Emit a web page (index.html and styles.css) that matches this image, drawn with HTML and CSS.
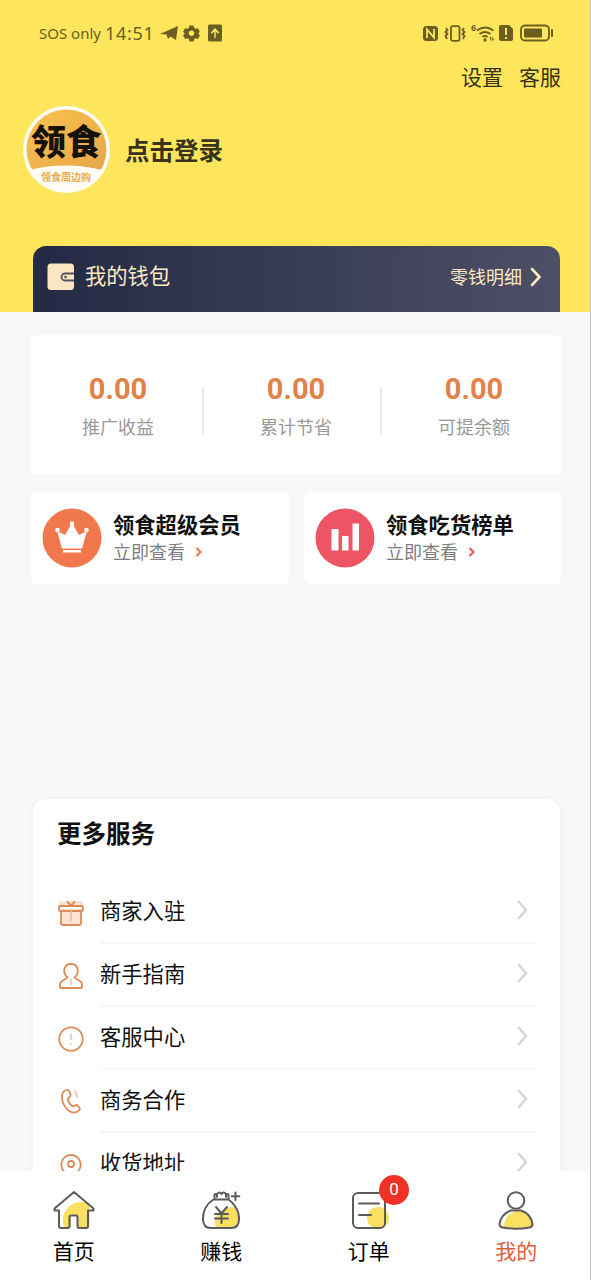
FILE: index.html
```html
<!DOCTYPE html>
<html lang="zh-CN">
<head>
<meta charset="utf-8">
<title>我的</title>
<link rel="stylesheet" href="styles.css">
</head>
<body>
<div class="screen">
  <header class="hero">
    <div class="status">
      <span class="carrier">SOS only</span>
      <span class="clock">14:51</span>
      <svg class="status-left" width="66" height="20" viewBox="0 0 66 20">
        <path d="M0 11 18 3 16 17 10.500 13.500 8 16 6.500 11.500Z"/>
        <path fill-rule="evenodd" d="M29.500 2.500h4l.7 2.500 1.300.8 2.400-.6 2 3.500-1.700 1.800 1.700 2-2 3.500-2.400-.7-1.300.8-.7 2.400h-4l-.7-2.400-1.300-.8-2.400.7-2-3.500 1.700-2-1.700-1.800 2-3.500 2.400.6 1.300-.8ZM31.500 7.400a2.800 2.800 0 1 0 .01 0Z"/>
        <path fill-rule="evenodd" d="M49.500 1.500h11a1.500 1.500 0 0 1 1.500 1.500v14a1.500 1.500 0 0 1-1.500 1.500h-11a1.500 1.500 0 0 1-1.500-1.500v-14a1.500 1.500 0 0 1 1.500-1.500ZM55 5 50.800 9.600 52 10.700 54.300 8.500V15h1.400V8.500L58 10.700 59.200 9.600Z"/>
      </svg>
      <svg class="status-right" width="132" height="22" viewBox="0 0 132 22">
        <rect x="2" y="4" width="15" height="15" rx="3.500"/>
        <path class="cut" d="M6 16V7.500l7 8V7"/>
        <g class="line">
          <rect x="30" y="4.200" width="8.500" height="14.600" rx="1.500"/>
          <path d="m25 6 1.500 2-2 2 2 2-2 2 1.500 3M43 6l-1.500 2 2 2-2 2 2 2-1.500 3"/>
          <path d="M56 8.500q8-6 16.500 0M58.500 12q5.500-4 11 0M61.500 15q2.700-2 5 0"/>
          <rect x="100" y="3.500" width="28" height="15" rx="4"/>
        </g>
        <text class="tiny" x="50" y="9">6</text>
        <circle cx="64" cy="18" r="1.700"/>
        <path d="m68.500 16 1.700-1.700V19Zm4.500 1.500-1.700 1.700V14.500Z"/>
        <path fill-rule="evenodd" d="M82 3h6l4 4v10q0 2-2 2h-10q-2 0-2-2V5q0-2 2-2ZM84 6v7h2V6Zm0 9v2h2v-2Z"/>
        <rect x="103" y="6.500" width="18" height="9" rx="1"/>
        <rect x="130" y="7" width="2" height="8" rx="1"/>
      </svg>
    </div>
    <nav class="links"><a>设置</a><a>客服</a></nav>
    <div class="profile">
      <svg class="avatar" width="88" height="88" viewBox="0 0 88 88">
        <defs>
          <clipPath id="disc"><circle cx="44.500" cy="43.500" r="40"/></clipPath>
          <linearGradient id="gold" x1="0" y1="0" x2="1" y2="1"><stop offset="0" stop-color="#fbc34c"/><stop offset="1" stop-color="#e5a64b"/></linearGradient>
        </defs>
        <circle cx="44.500" cy="43.500" r="43.500" fill="#fffdf5"/>
        <g clip-path="url(#disc)"><path fill="url(#gold)" d="M0 0h88v66Q44 53 0 66Z"/></g>
        <text class="logo" x="44" y="49">领食</text>
        <text class="logo-sub" x="44" y="75">领食周边购</text>
      </svg>
      <span class="login">点击登录</span>
    </div>
    <div class="wallet">
      <svg width="28" height="28" viewBox="0 0 28 28">
        <rect x=".5" y=".5" width="26.500" height="26.500" rx="3.500" fill="#fbe7c1"/>
        <path d="M27 10.500h-9a3.500 3.500 0 0 0 0 7h9" fill="none" stroke="#555260" stroke-width="1.800"/>
        <circle cx="18.500" cy="14" r="1.300" fill="#555260"/>
      </svg>
      <span class="wallet-title">我的钱包</span>
      <span class="wallet-more">零钱明细</span>
      <svg width="12" height="20" viewBox="0 0 12 20"><path d="m2 2 7.500 8L2 18" fill="none" stroke="#fbe9c3" stroke-width="2.600" stroke-linecap="round"/></svg>
    </div>
  </header>

  <main class="content">
    <section class="stats">
      <div class="stat"><b>0.00</b><span>推广收益</span></div>
      <div class="stat"><b>0.00</b><span>累计节省</span></div>
      <div class="stat"><b>0.00</b><span>可提余额</span></div>
    </section>

    <section class="promos">
      <div class="promo vip">
        <svg width="60" height="60" viewBox="0 0 60 60">
          <circle cx="30" cy="30" r="29.500" fill="#f1774d"/>
          <g fill="#fff"><path d="m15 23 8 4 7-12 7 12 8-4-5 17.500h-20Z"/><rect x="21" y="42" width="18" height="2.500"/><circle cx="15.500" cy="22" r="2.300"/><circle cx="30" cy="15.500" r="2.300"/><circle cx="44.500" cy="22" r="2.300"/></g>
        </svg>
        <div class="promo-text"><strong>领食超级会员</strong><span>立即查看<svg width="8" height="12" viewBox="0 0 8 12"><path d="m1.500 2 4 4-4 4"/></svg></span></div>
      </div>
      <div class="promo rank">
        <svg width="60" height="60" viewBox="0 0 60 60">
          <circle cx="30" cy="30" r="29.500" fill="#ed5565"/>
          <g fill="#fff"><rect x="16.500" y="21" width="7" height="21.500" rx=".5"/><rect x="27" y="28" width="6.500" height="14.500" rx=".5"/><rect x="37.500" y="15.500" width="6.500" height="27" rx=".5"/></g>
        </svg>
        <div class="promo-text"><strong>领食吃货榜单</strong><span>立即查看<svg width="8" height="12" viewBox="0 0 8 12"><path d="m1.500 2 4 4-4 4"/></svg></span></div>
      </div>
    </section>

    <section class="services">
      <h2>更多服务</h2>
      <div class="service">
        <svg class="icon" width="28" height="28" viewBox="0 0 28 28"><path fill="#fde3d3" stroke="none" d="M2 2h24v6H2Zm2 8h20v15H4Z"/><rect x="2" y="7" width="24" height="5" rx="1"/><path d="M4 12v12.500q0 1.500 1.500 1.500h17q1.500 0 1.500-1.500V12M10 2.500l4 4 4-4"/><path class="faint" d="M14 10v12"/></svg>
        <div class="row">商家入驻<svg class="arrow" width="14" height="24" viewBox="0 0 14 24"><path d="m3 3 8 9-8 9"/></svg></div>
      </div>
      <div class="service">
        <svg class="icon" width="28" height="28" viewBox="0 0 28 28"><path d="M10.500 15.500C5 11 6.500 2 14 2s9 9 3.500 13.500l6 4q1.500 1 1.500 3v2.500q0 1-1 1H4q-1 0-1-1v-2.500q0-2 1.500-3Z"/><path class="faint" d="M14 17v6"/></svg>
        <div class="row">新手指南<svg class="arrow" width="14" height="24" viewBox="0 0 14 24"><path d="m3 3 8 9-8 9"/></svg></div>
      </div>
      <div class="service">
        <svg class="icon" width="28" height="28" viewBox="0 0 28 28"><circle cx="14" cy="14" r="11.700"/><path class="faint" d="M14 9v6m0 3v1.500"/></svg>
        <div class="row">客服中心<svg class="arrow" width="14" height="24" viewBox="0 0 14 24"><path d="m3 3 8 9-8 9"/></svg></div>
      </div>
      <div class="service">
        <svg class="icon" width="28" height="28" viewBox="0 0 28 28"><path d="m8 2.500 2-.5q1.300-.3 2 1l1.500 3.500q.5 1.500-1 2.500l-1 1q-1 1-.4 2.400 1 3 3.400 5.100 1.500 1.200 3 .4l1.500-.8q1-.4 1.800.5l1.700 2.400q.8 1.200-.3 2.200-4.700 4.800-10.700.3Q5.500 17.500 5 10q-.3-5.500 3-7.500Z"/><path class="faint" d="M17.500 2.500q3 3 2.500 7"/></svg>
        <div class="row">商务合作<svg class="arrow" width="14" height="24" viewBox="0 0 14 24"><path d="m3 3 8 9-8 9"/></svg></div>
      </div>
      <div class="service">
        <svg class="icon" width="28" height="28" viewBox="0 0 28 28"><path d="M9 22C3 18 3.500 11.500 6.500 7.500q3-3.500 7.500-3.500t7.500 3.500C24.500 11.500 25 18 19 22l-5 4Z"/><circle cx="14" cy="13" r="3"/></svg>
        <div class="row">收货地址<svg class="arrow" width="14" height="24" viewBox="0 0 14 24"><path d="m3 3 8 9-8 9"/></svg></div>
      </div>
    </section>
  </main>

  <nav class="tabs">
    <div class="tab">
      <svg width="44" height="42" viewBox="0 0 44 42"><path class="fill" d="M37.500 14v23.500H26V26h-7v11.500h-6.500C7 26 16 12 29 12q5 0 8.500 2Z"/><path d="M22 2 2.500 18.500v2H7v15.500q0 2 2 2h6.500q2 0 2-2V27q0-1.500 1.500-1.500h5q1.500 0 1.500 1.500v9q0 2 2 2h6.500q2 0 2-2V20.500h5.500v-2Z"/></svg>
      <span>首页</span>
    </div>
    <div class="tab">
      <svg width="44" height="42" viewBox="0 0 44 42"><path class="fill" d="M17.500 37.500C12 28 24 14 37.500 17.500q3 5 2.500 12-.5 8-7 8Z"/><path d="M14.500 9.500C7 14 4 22 4 29q0 9 8 9h20q8 0 8-9 0-7-3.500-12-3-5-7-7.500ZM15.500 9V5q0-1 1-1h1.500V7m0-3q3-3 4.500 0 2-3 4.500 0V7m0-3h1.500q1 0 1 1v4M36.500 2.500v7.500M32.700 6.200h7.600M17 17l5.500 6.500L28 17M22.500 23v10M16 24h13M16 28.500h13"/></svg>
      <span>赚钱</span>
    </div>
    <div class="tab">
      <svg width="44" height="42" viewBox="0 0 44 42"><circle class="fill" cx="31" cy="28" r="11"/><rect x="6" y="3" width="32" height="35" rx="5"/><path d="M12 13.500h20M12 25h12"/></svg>
      <span>订单</span>
      <i class="badge">0</i>
    </div>
    <div class="tab active">
      <svg width="44" height="42" viewBox="0 0 44 42"><path class="fill" d="M10 37C10 27 16 22 24 21q13 2 14.500 15Q28 40 10 37Z"/><circle cx="22" cy="10.500" r="8.300"/><path d="M17 20.500h10Q37 24 38.500 34q0 3-3 3.500Q22 40 8.500 37.500q-3-.5-3-3.500Q7 24 17 20.500Z"/></svg>
      <span>我的</span>
    </div>
  </nav>
</div>
</body>
</html>
```
FILE: styles.css
```css
* { box-sizing: border-box; }
body { margin: 0; background: #f7f8fa; font-family: "Noto Sans CJK SC", sans-serif; color: #111; }
svg { display: block; flex: none; }
.screen { width: 591px; height: 1280px; overflow: hidden; display: flex; flex-direction: column; border-right: 1px solid #c3c4c7; }

.hero { height: 312px; flex: none; background: #fde65c; display: flex; flex-direction: column; }
.status { height: 60px; padding: 6px 37px 0 39px; display: flex; align-items: center; color: #6b5f20; line-height: 24px; }
.status svg { fill: #6b5f20; }
.carrier { width: 66px; font-family: "Noto Sans", sans-serif; font-size: 15px; white-space: nowrap; }
.clock { width: 54px; font-family: "Noto Sans", sans-serif; font-size: 18px; letter-spacing: .7px; }
.status-left { margin-left: 1px; }
.status-right { margin-left: auto; }
.status-right .line { fill: none; stroke: #6b5f20; stroke-width: 1.800; }
.status-right .cut { fill: none; stroke: #fde65c; stroke-width: 1.800; }
.tiny { font: bold 9px "Noto Sans", sans-serif; }
.links { display: flex; justify-content: flex-end; gap: 16px; padding-right: 29px; height: 32px; font-size: 21px; line-height: 32px; color: #373216; }
.profile { display: flex; align-items: center; gap: 15px; height: 88px; margin: 14px 0 0 22px; }
.logo { font-size: 35px; font-weight: 900; text-anchor: middle; fill: #15110b; }
.logo-sub { font-size: 10px; font-weight: 700; text-anchor: middle; fill: #e9ab4e; }
.login { font-size: 24.500px; font-weight: 700; line-height: 34px; color: #38331c; }
.wallet { height: 66px; margin: 52px 30px 0 33px; padding: 0 18px 5px 14px; border-radius: 13px 13px 0 0; background: linear-gradient(90deg, #242945, #4d4f66); display: flex; align-items: center; color: #fbe9c3; }
.wallet-title { margin-left: 10px; padding-bottom: 3px; font-size: 21.300px; line-height: 30px; }
.wallet-more { margin: 0 8px 0 auto; padding-bottom: 2px; font-size: 18px; line-height: 30px; }

.content { flex: 1; min-height: 0; overflow: hidden; padding: 23px 29px 0 31px; }
.stats { height: 139px; background: #fff; border-radius: 6px; display: flex; }
.stat { flex: 0 0 178px; height: 139px; padding: 38px 4px 0 0; display: flex; flex-direction: column; align-items: center; background: linear-gradient(#e9e9e9, #e9e9e9) 171px 52px / 2px 48px no-repeat; }
.stat:last-child { background: none; }
.stat b { font: 700 29px/32px Roboto, sans-serif; color: #e0824a; }
.stat span { margin-top: 7px; font-size: 18px; line-height: 28px; color: #999; }
.promos { margin-top: 18px; display: grid; grid-template-columns: 258px 257px; gap: 15px; }
.promo { height: 92px; padding: 0 0 0 11px; background: #fff; border-radius: 7px; display: flex; align-items: center; gap: 11px; }
.promo-text { display: flex; flex-direction: column; padding-bottom: 1px; }
.promo-text strong { font-size: 21.300px; line-height: 28px; font-weight: 700; }
.promo-text span { display: flex; align-items: center; gap: 10px; font-size: 18px; line-height: 27px; color: #7d7d7d; }
.promo-text path { fill: none; stroke-width: 2.200; }
.vip .promo-text path { stroke: #f1774d; }
.rank .promo-text path { stroke: #ed5565; }

.services { margin: 215px 1px 0 2px; height: 430px; padding: 0 24px; background: #fff; border-radius: 13px; box-shadow: 0 0 8px rgba(0, 0, 0, .04); }
.services h2 { margin: 0; padding-top: 16px; height: 82px; font-size: 24.500px; line-height: 35px; font-weight: 700; }
.service { display: flex; align-items: center; gap: 15px; height: 63px; }
.icon { fill: none; stroke: #e08a58; stroke-width: 1.800; stroke-linejoin: round; }
.icon .faint { stroke: #edb49b; stroke-width: 1.300; }
.row { flex: 1; height: 63px; display: flex; align-items: center; justify-content: space-between; padding: 0 7px 3px 0; border-bottom: 2px solid #f7f7f7; font-size: 21.300px; line-height: 32px; }
.arrow { fill: none; stroke: #d5d5d5; stroke-width: 2.600; }

.tabs { height: 109px; flex: none; background: #fff; display: flex; }
.tab { flex: 1; position: relative; padding-top: 19px; display: flex; flex-direction: column; align-items: center; font-size: 21px; }
.tab span { margin-top: 3px; line-height: 30px; color: #000; }
.tab svg { fill: none; stroke: #5b5b5b; stroke-width: 2; stroke-linejoin: round; stroke-linecap: round; }
.tab .fill { fill: #fae060; stroke: none; }
.tab.active span { color: #e05d38; }
.badge { position: absolute; left: 84px; top: 4px; width: 30px; height: 30px; border-radius: 50%; background: #f03226; color: #fff; font: 17px/29px Roboto, sans-serif; text-align: center; }
```
